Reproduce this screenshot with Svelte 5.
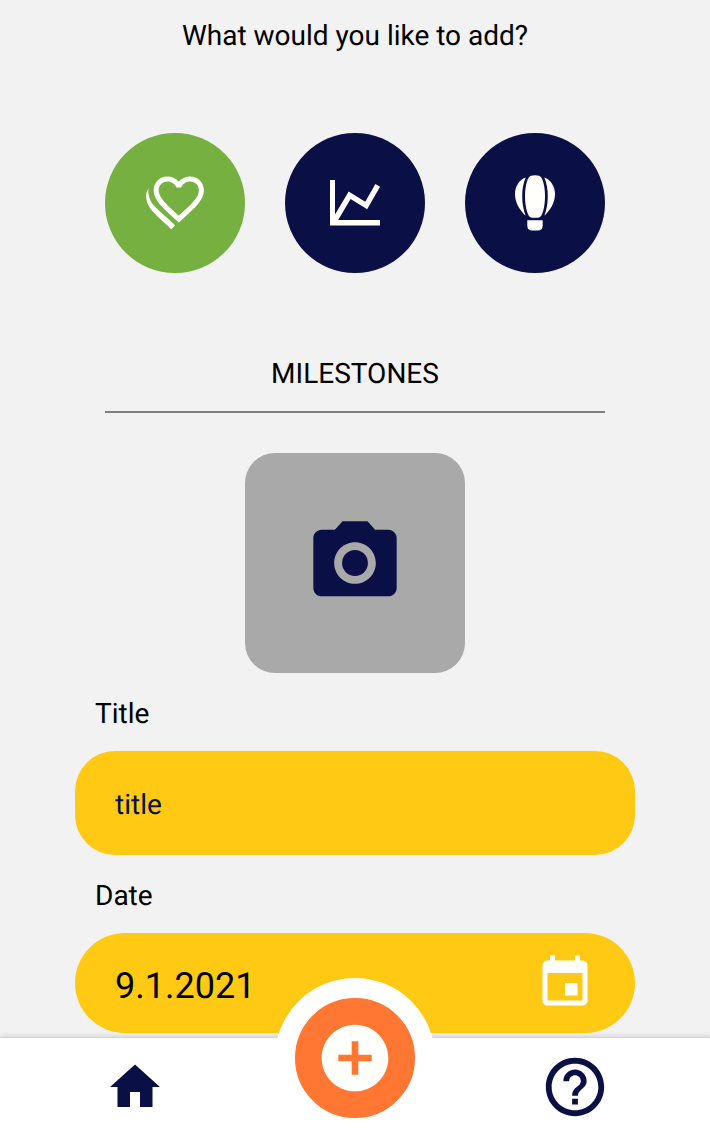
<script>
  let active = $state('milestones');
  let title = $state('title');
  const date = '9.1.2021';
</script>

<div class="app">
  <main>
    <h1>What would you like to add?</h1>

    <div class="kinds">
      <button class:active={active === 'milestones'} onclick={() => (active = 'milestones')} aria-label="Milestones">
        <svg viewBox="0 0 140 140">
          <path transform="translate(43.6 35.9) scale(2.515)" d="M16.5 3c-1.74 0-3.41.81-4.5 2.09C10.91 3.81 9.24 3 7.5 3 4.42 3 2 5.42 2 8.5c0 3.78 3.4 6.86 8.55 11.54L12 21.35l1.45-1.32C18.6 15.36 22 12.28 22 8.5 22 5.42 19.58 3 16.5 3zm-4.4 15.55l-.1.1-.1-.1C7.14 14.24 4 11.39 4 8.5 4 6.5 5.5 5 7.5 5c1.54 0 3.04.99 3.57 2.36h1.87C13.46 5.99 14.96 5 16.5 5c2 0 3.5 1.5 3.5 3.5 0 2.89-3.14 5.74-7.9 10.05z" />
          <path d="M43.6 55.5C41.3 58.5 40.8 61.500 41.200 65C41.700 70 44 74.500 47.500 78.200C53.500 84.500 60 90.200 66.200 96.300L70.200 92.400C63 85.500 55.500 79.500 49.300 73C45 68.500 42.600 61.500 43.6 55.500Z" />
        </svg>
      </button>
      <button class:active={active === 'growth'} onclick={() => (active = 'growth')} aria-label="Growth">
        <svg viewBox="0 0 140 140">
          <path d="M45 47H50V87H95V92.500H45Z" />
          <path class="line" d="M48.500 89.500L64.600 62.300L81.200 72.500L92.700 52.300" />
        </svg>
      </button>
      <button class:active={active === 'adventures'} onclick={() => (active = 'adventures')} aria-label="Adventures">
        <svg viewBox="0 0 140 140">
          <path d="M66 42.700Q70 42 74 42.700C77.500 43.400 80 53 80 63C80 72 78.200 80.500 75.500 83.500Q74.300 84.700 72.500 84.700H67.500Q65.700 84.700 64.500 83.500C61.800 80.500 60 72 60 63C60 53 62.500 43.400 66 42.700Z" />
          <path d="M60.700 44.500C54 47 50 53.500 50 61C50 69.500 54.500 77 60.600 82.700C58.300 76.500 57.200 70 57.200 63C57.200 56 58.500 49.500 60.700 44.500Z" />
          <path d="M79.300 44.500C86 47 90 53.500 90 61C90 69.500 85.500 77 79.400 82.700C81.700 76.500 82.800 70 82.800 63C82.800 56 81.500 49.500 79.300 44.500Z" />
          <path d="M62.300 87.200H77.700V92.500Q77.700 97.500 72.700 97.500H67.300Q62.300 97.500 62.300 92.500Z" />
        </svg>
      </button>
    </div>

    <h2>MILESTONES</h2>

    <button class="photo" aria-label="Add photo">
      <svg viewBox="0 0 24 24">
        <circle cx="12" cy="12" r="3.1" />
        <path d="M9 2L7.170 4H4c-1.100 0-2 .9-2 2v12c0 1.100.9 2 2 2h16c1.100 0 2-.9 2-2V6c0-1.100-.9-2-2-2h-3.170L15 2H9zm3 15c-2.760 0-5-2.240-5-5s2.240-5 5-5 5 2.240 5 5-2.240 5-5 5z" />
      </svg>
    </button>

    <label for="title">Title</label>
    <input id="title" class="field" bind:value={title} />

    <span class="label">Date</span>
    <div class="field date">
      <span>{date}</span>
      <svg viewBox="0 0 24 24">
        <path d="M17 12h-5v5h5v-5zM16 1v2H8V1H6v2H5c-1.110 0-1.990.9-1.990 2L3 19c0 1.100.890 2 2 2h14c1.100 0 2-.9 2-2V5c0-1.100-.9-2-2-2h-1V1h-2zm3 18H5V8h14v11z" />
      </svg>
    </div>
  </main>

  <nav>
    <button aria-label="Home">
      <svg class="home" viewBox="0 0 24 24"><path d="M10 20v-6h4v6h5v-8h3L12 3 2 12h3v8z" /></svg>
    </button>
    <button class="add" aria-label="Add">
      <svg viewBox="0 0 24 24"><path d="M12 2C6.480 2 2 6.480 2 12s4.480 10 10 10 10-4.480 10-10S17.520 2 12 2zm5 11h-4v4h-2v-4H7v-2h4V7h2v4h4v2z" /></svg>
    </button>
    <button aria-label="Help">
      <svg class="help" viewBox="0 0 24 24"><path d="M11 18h2v-2h-2v2zm1-16C6.480 2 2 6.480 2 12s4.480 10 10 10 10-4.480 10-10S17.520 2 12 2zm0 18c-4.410 0-8-3.590-8-8s3.590-8 8-8 8 3.590 8 8-3.590 8-8 8zm0-14c-2.210 0-4 1.790-4 4h2c0-1.100.9-2 2-2s2 .9 2 2c0 2-3 1.750-3 5h2c0-2.250 3-2.500 3-5 0-2.210-1.790-4-4-4z" /></svg>
    </button>
  </nav>
</div>

<style>
  :global(body) {
    margin: 0;
    background: #f2f2f2;
  }

  .app {
    display: flex;
    flex-direction: column;
    height: 1133px;
    overflow: hidden;
    font: 28px/33px Roboto, sans-serif;
    text-rendering: geometricPrecision;
    color: #000;
  }

  main {
    flex: 1;
    min-height: 0;
    box-sizing: border-box;
    display: flex;
    flex-direction: column;
    padding: 19px 75px 0;
    overflow: hidden;
    background: #f2f2f2;
  }

  main > * {
    flex-shrink: 0;
  }

  h1,
  h2 {
    margin: 0;
    font: inherit;
    text-align: center;
  }

  h2 {
    margin: 84px 30px 40px;
    padding-bottom: 21px;
    border-bottom: 2px solid #808080;
  }

  button {
    border: 0;
    padding: 0;
    background: none;
    font: inherit;
  }

  svg {
    display: block;
    fill: currentColor;
  }

  .kinds {
    display: flex;
    justify-content: center;
    gap: 40px;
    margin-top: 81px;
  }

  .kinds button {
    width: 140px;
    height: 140px;
    border-radius: 50%;
    background: #0a0f45;
    color: #fffffc;
  }

  .kinds .active {
    background: #76b041;
  }

  .line {
    fill: none;
    stroke: currentColor;
    stroke-width: 5.4;
  }

  .photo {
    display: grid;
    place-items: center;
    align-self: center;
    width: 220px;
    height: 220px;
    margin-bottom: 24px;
    border-radius: 30px;
    background: #a9a9a9;
    color: #0a0f45;
  }

  .photo svg {
    width: 100px;
    height: 100px;
  }

  label,
  .label {
    padding-left: 20px;
    margin-bottom: 21px;
  }

  .field {
    box-sizing: border-box;
    height: 104px;
    margin-bottom: 24px;
    padding: 3px 40px 0;
    border: 0;
    border-radius: 40px;
    outline: 0;
    background: #ffc914;
    color: #0a0f45;
    font: inherit;
    text-rendering: inherit;
  }

  .date {
    display: flex;
    align-items: center;
    justify-content: space-between;
    height: 100px;
    margin-bottom: 0;
    padding-top: 0;
    border-radius: 50px;
    color: #000;
  }

  .date span {
    padding-top: 5px;
    font-size: 36px;
    line-height: 42px;
  }

  .date svg {
    width: 60px;
    height: 60px;
    color: #fffffc;
  }

  nav {
    position: relative;
    display: grid;
    grid-template-columns: 270px 170px 270px;
    height: 95px;
    border-top: 1px solid #d5d5d5;
    background: #fff;
    box-shadow: 0 0 6px rgba(0, 0, 0, 0.18);
    color: #0a0f45;
  }

  nav button {
    display: grid;
    place-items: center;
    color: #0a0f45;
    padding-top: 3px;
  }

  .home {
    width: 60px;
    height: 60px;
  }

  .help {
    width: 70px;
    height: 70px;
  }

  .add {
    position: absolute;
    left: 275px;
    top: -60px;
    box-sizing: border-box;
    width: 160px;
    height: 160px;
    padding: 0;
    border: 20px solid #fff;
    border-radius: 50%;
    background: #ff7733;
    color: #fffffc;
  }

  .add svg {
    width: 80px;
    height: 80px;
  }

  nav button:last-child {
    grid-column: 3;
  }
</style>
